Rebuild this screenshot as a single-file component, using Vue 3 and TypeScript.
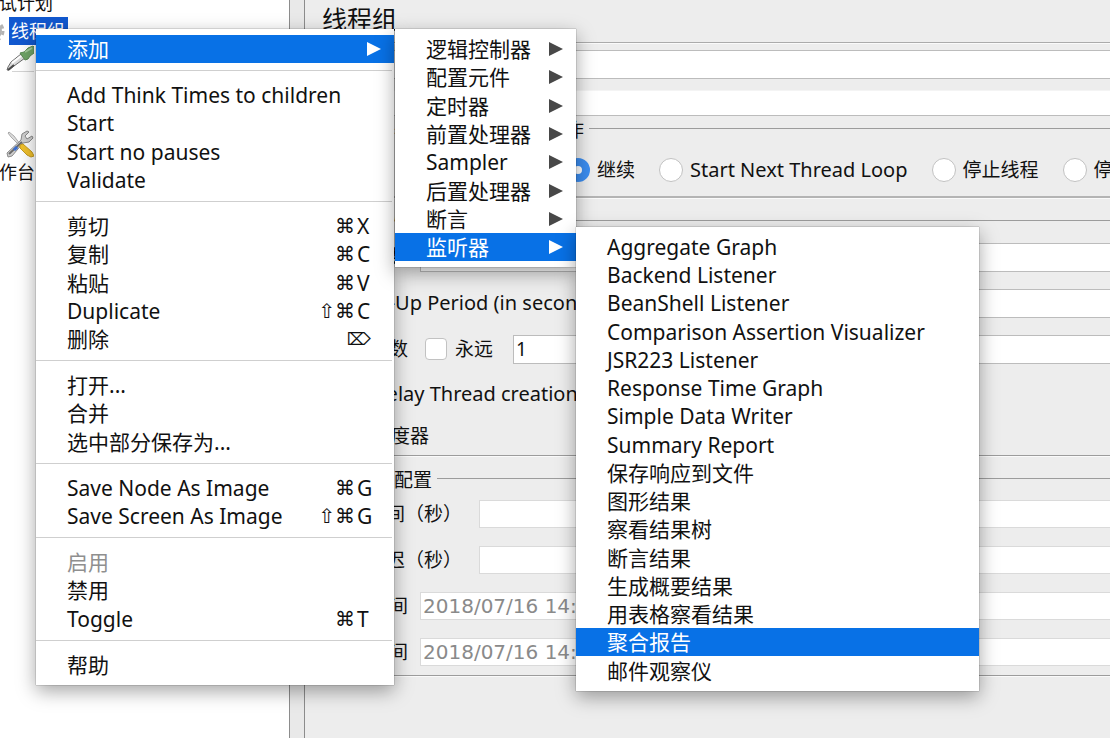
<script setup lang="ts">
import { ref } from 'vue'

interface MenuItem {
  label: string
  mods?: string
  keyName?: string
  submenu?: boolean
  active?: boolean
  disabled?: boolean
}

const contextGroups: MenuItem[][] = [
  [{ label: '添加', submenu: true, active: true }],
  [
    { label: 'Add Think Times to children' },
    { label: 'Start' },
    { label: 'Start no pauses' },
    { label: 'Validate' },
  ],
  [
    { label: '剪切', mods: '⌘', keyName: 'X' },
    { label: '复制', mods: '⌘', keyName: 'C' },
    { label: '粘贴', mods: '⌘', keyName: 'V' },
    { label: 'Duplicate', mods: '⇧⌘', keyName: 'C' },
    { label: '删除', mods: '⌦' },
  ],
  [{ label: '打开...' }, { label: '合并' }, { label: '选中部分保存为...' }],
  [
    { label: 'Save Node As Image', mods: '⌘', keyName: 'G' },
    { label: 'Save Screen As Image', mods: '⇧⌘', keyName: 'G' },
  ],
  [
    { label: '启用', disabled: true },
    { label: '禁用' },
    { label: 'Toggle', mods: '⌘', keyName: 'T' },
  ],
  [{ label: '帮助' }],
]

const addItems: MenuItem[] = [
  '逻辑控制器', '配置元件', '定时器', '前置处理器', 'Sampler', '后置处理器', '断言', '监听器',
].map((label) => ({ label, submenu: true, active: label === '监听器' }))

const listenerItems: MenuItem[] = [
  'Aggregate Graph', 'Backend Listener', 'BeanShell Listener',
  'Comparison Assertion Visualizer', 'JSR223 Listener', 'Response Time Graph',
  'Simple Data Writer', 'Summary Report', '保存响应到文件', '图形结果', '察看结果树',
  '断言结果', '生成概要结果', '用表格察看结果', '聚合报告', '邮件观察仪',
].map((label) => ({ label, active: label === '聚合报告' }))

const errorActions = [
  { label: '继续' },
  { label: 'Start Next Thread Loop', latin: true },
  { label: '停止线程' },
  { label: '停止测试' },
]
const onError = ref('继续')
const name = ref('')
const comment = ref('')
const threads = ref('')
const rampUp = ref('')
const forever = ref(false)
const loops = ref('1')
const delayed = ref(false)
const scheduler = ref(true)
const duration = ref('')
const startDelay = ref('')
const startTime = ref('2018/07/16 14:27:17')
const endTime = ref('2018/07/16 14:27:17')
</script>

<template>
  <div class="window">
    <aside class="sidebar">
      <ul class="tree">
        <li class="node root">测试计划</li>
        <li class="node">
          <svg class="gear" viewBox="0 0 24 24" aria-hidden="true">
            <circle cx="12" cy="12" r="7" fill="none" stroke="#b4b4b4" stroke-width="4" />
            <circle cx="12" cy="12" r="10" fill="none" stroke="#b4b4b4" stroke-width="3" stroke-dasharray="4 4" />
          </svg>
          <span class="chosen">线程组</span>
        </li>
        <li class="node sampler">
          <svg class="icon" viewBox="0 0 28 28" aria-hidden="true">
            <path d="M6 26.500H28" stroke="#d4d4d4" />
            <path d="M1 25l1-3 3-5L15 9l4 4L8 21l-5 4z" fill="#dcdcdc" stroke="#6a6a6a" />
            <path d="M6 18l9-7" stroke="#fff" stroke-width="2" />
            <path d="M2 25l6-5" stroke="#4a4a4a" stroke-width="2" />
            <path d="M14 8l4-1 4-4 5-2 1 1v6l-4 3-2 3-3 1z" fill="#6fa466" stroke="#5b8a53" />
            <path d="M19 7l7-4" stroke="#a5cb9c" stroke-width="2" />
          </svg>
        </li>
        <li class="node tools">
          <svg class="icon" viewBox="0 0 28 28" aria-hidden="true">
            <path d="M2 3l1-1 5 4 6 8-1 1-8-8z" fill="#dcdcdc" stroke="#aaa" />
            <path d="M2 27l-1-4L15 10l1-6 5-3 2 1-4 4 2 3 5-3 1 2-4 4-6 1L6 26z" fill="#cfcfcf" stroke="#8a8a8a" />
            <path d="M3 24L16 12" stroke="#6b6b6b" stroke-width="2" />
            <path d="M8 20l3-3" stroke="#3a6ed0" stroke-width="3" />
            <path d="M14 15l3-1 9 8 2 4-3 1-4-2-7-7z" fill="#f0c02c" stroke="#c39a20" />
          </svg>
        </li>
        <li class="node bench">工作台</li>
      </ul>
    </aside>
    <div class="divider"></div>

    <main class="panel">
      <h1>线程组</h1>
      <input v-model="name" class="field wide name" aria-label="名称" />
      <input v-model="comment" class="field wide comment" aria-label="注释" />

      <fieldset class="box actions">
        <legend>在取样器错误后要执行的动作</legend>
        <div class="choices">
          <label v-for="a in errorActions" :key="a.label" class="choice" :class="{ latin: a.latin }">
            <input v-model="onError" type="radio" name="on-error" :value="a.label" />{{ a.label }}
          </label>
        </div>
      </fieldset>

      <fieldset class="box props">
        <legend>线程属性</legend>
        <div class="row">
          <label class="caption" for="threads">线程数</label>
          <input id="threads" v-model="threads" class="field" />
        </div>
        <div class="row">
          <label class="ramp latin" for="ramp">Ramp-Up Period (in seconds)</label>
          <input id="ramp" v-model="rampUp" class="field" />
        </div>
        <div class="row">
          <label class="caption" for="loops">循环次数</label>
          <label class="check"><input v-model="forever" type="checkbox" />永远</label>
          <input id="loops" v-model="loops" class="field" />
        </div>
        <div class="row option">
          <label class="check latin"><input v-model="delayed" type="checkbox" />Delay Thread creation until needed</label>
        </div>
        <div class="row option last">
          <label class="check"><input v-model="scheduler" type="checkbox" />调度器</label>
        </div>
      </fieldset>

      <fieldset class="box schedule">
        <legend>调度器配置</legend>
        <div class="row">
          <label class="seconds" for="duration">持续时间（秒）</label>
          <input id="duration" v-model="duration" class="field soft" />
        </div>
        <div class="row">
          <label class="seconds" for="delay">启动延迟（秒）</label>
          <input id="delay" v-model="startDelay" class="field soft" />
        </div>
        <div class="row">
          <label class="caption" for="start">启动时间</label>
          <input id="start" v-model="startTime" class="field soft" disabled />
        </div>
        <div class="row">
          <label class="caption" for="end">结束时间</label>
          <input id="end" v-model="endTime" class="field soft" disabled />
        </div>
      </fieldset>
    </main>

    <div class="menu context" role="menu">
      <div v-for="(group, g) in contextGroups" :key="g" class="group">
        <button
          v-for="item in group" :key="item.label" type="button" role="menuitem"
          class="item" :class="{ active: item.active }" :disabled="item.disabled"
        >
          <span class="label">{{ item.label }}</span>
          <span v-if="item.mods" class="mods" :class="{ solo: !item.keyName }">{{ item.mods }}</span>
          <span v-if="item.keyName" class="key">{{ item.keyName }}</span>
          <svg v-if="item.submenu" class="arrow" viewBox="0 0 14 14" aria-hidden="true"><path d="M0 0l14 7-14 7z" fill="currentColor" /></svg>
        </button>
      </div>
    </div>

    <div class="menu add" role="menu">
      <button
        v-for="item in addItems" :key="item.label" type="button" role="menuitem"
        class="item" :class="{ active: item.active }"
      >
        <span class="label">{{ item.label }}</span>
        <svg class="arrow" viewBox="0 0 14 14" aria-hidden="true"><path d="M0 0l14 7-14 7z" fill="currentColor" /></svg>
      </button>
    </div>

    <div class="menu listeners" role="menu">
      <button
        v-for="item in listenerItems" :key="item.label" type="button" role="menuitem"
        class="item" :class="{ active: item.active }"
      >
        <span class="label">{{ item.label }}</span>
      </button>
    </div>
  </div>
</template>

<style>
body {
  margin: 0;
}
</style>

<style scoped>
.window {
  position: relative;
  display: grid;
  grid-template-columns: 289px 16px minmax(0, 1fr);
  min-height: 100vh;
  overflow: hidden;
  background: #ededed;
  color: #111;
  font: 19px/24px "Noto Sans", "Noto Sans CJK SC", sans-serif;
}
.window * {
  box-sizing: border-box;
}
button,
input {
  margin: 0;
  font: inherit;
  color: inherit;
}
.latin {
  font-size: 20px;
}

/* tree */
.sidebar {
  overflow: hidden;
  background: #fff;
}
.tree {
  margin: -11px 0 0 -19px;
  padding: 0;
  list-style: none;
  font-size: 18px;
}
.node {
  display: flex;
  align-items: center;
  height: 28px;
}
.gear {
  width: 24px;
  height: 24px;
}
.chosen {
  margin-left: 4px;
  padding: 0 3px 0 2px;
  line-height: 28px;
  background: #1158cf;
  color: #fff;
}
.icon {
  width: 28px;
  height: 28px;
  margin-left: 25px;
}
.tools {
  margin-top: 57px;
}

.divider {
  border: solid #8c8c8c;
  border-width: 0 1px;
  background: #e9e9e9;
}

/* form */
.panel {
  display: flex;
  flex-direction: column;
}
h1 {
  margin: 0;
  padding: 0 17px 4px;
  border-bottom: 1px solid #ababab;
  box-shadow: 0 1px #fafafa;
  font-size: 25px;
  font-weight: 400;
  line-height: 38px;
}
.field {
  flex: 1;
  min-width: 0;
  height: 29px;
  padding: 0 2px;
  border: 1px solid #bcbcbc;
  border-right: 0;
  border-radius: 0;
  background: #fff;
}
.field:disabled {
  color: #8a8a8a;
  font-family: "DejaVu Sans", sans-serif;
  font-size: 20px;
}
.soft {
  height: 28px;
  border-color: #dadada;
}
.wide {
  flex: none;
  margin-left: 70px;
}
.name {
  margin-top: 7px;
}
.comment {
  height: 26px;
  margin-top: 11px;
  border-top-color: #f4f4f4;
}
.box {
  min-width: 0;
  margin: 0 0 0 12px;
  padding: 0 0 0 11px;
  border: 1px solid #9c9c9c;
  border-right: 0;
  box-shadow: 0 1px #fafafa;
}
legend {
  margin-left: 3px;
  padding: 4px 5px 0;
  line-height: 20px;
}
.actions {
  padding-top: 18px;
  padding-bottom: 14px;
  border-bottom: 2px solid #b4b4b4;
}
.choices {
  display: flex;
  gap: 24px;
  padding-left: 237px;
}
.choice {
  display: flex;
  flex: none;
  align-items: center;
  gap: 7px;
  height: 24px;
  white-space: nowrap;
}
input[type="radio"],
input[type="checkbox"] {
  flex: none;
  appearance: none;
  width: 24px;
  height: 24px;
  border: 1px solid #c2c2c2;
  border-radius: 12px;
  background: #fff;
}
input[type="radio"]:checked {
  border: 8px solid #3b8df0;
}
input[type="checkbox"] {
  width: 22px;
  height: 22px;
  border-radius: 4px;
}
.props {
  margin-top: 10px;
  padding-top: 2px;
}
.row {
  display: flex;
  align-items: center;
  height: 46px;
  white-space: nowrap;
}
.caption {
  width: 79px;
  margin-right: 12px;
  text-align: right;
}
.seconds {
  width: 150px;
}
.ramp {
  margin: 0 12px 0 5px;
}
.check {
  display: flex;
  align-items: center;
  gap: 8px;
}
.caption + .check {
  margin: 0 20px 0 5px;
}
.option {
  height: 44px;
  padding-left: 13px;
}
.last {
  height: 39px;
}
.schedule {
  margin-top: 10px;
  padding-top: 1px;
}

/* menus */
.menu {
  position: absolute;
  padding: 6px 0;
  background: #fff;
  box-shadow: 0 0 1px rgba(0, 0, 0, 0.6), 0 6px 18px rgba(0, 0, 0, 0.36);
  font-size: 21px;
}
.context {
  top: 29px;
  left: 36px;
  width: 358px;
}
.add {
  top: 29px;
  left: 395px;
  width: 181px;
}
.listeners {
  top: 227px;
  left: 576px;
  width: 403px;
}
.group + .group::before {
  content: "";
  display: block;
  height: 1px;
  margin: 7px 2px 10px 0;
  background: #cfcfcf;
}
.item {
  display: flex;
  align-items: center;
  width: 100%;
  height: 28px;
  padding: 0 13px 0 31px;
  border: 0;
  background: none;
  line-height: 26px;
  text-align: left;
  white-space: nowrap;
}
.item:disabled {
  color: #8f8f8f;
}
.context .item {
  padding-right: 23px;
}
.context .item:nth-child(3n),
.add .item:nth-child(3n),
.listeners .item:nth-child(4n) {
  height: 29px;
}
.item.active {
  background: #0871e6;
  color: #fff;
}
.label {
  flex: 1;
}
.mods {
  font-family: "DejaVu Sans", sans-serif;
  font-size: 20px;
}
.solo {
  font-size: 17px;
}
.key {
  width: 14px;
  margin-left: 2px;
}
.arrow {
  width: 14px;
  height: 14px;
  color: #484848;
}
.active .arrow {
  color: #fff;
}
.context .item .arrow {
  margin-right: -10px;
}
</style>
